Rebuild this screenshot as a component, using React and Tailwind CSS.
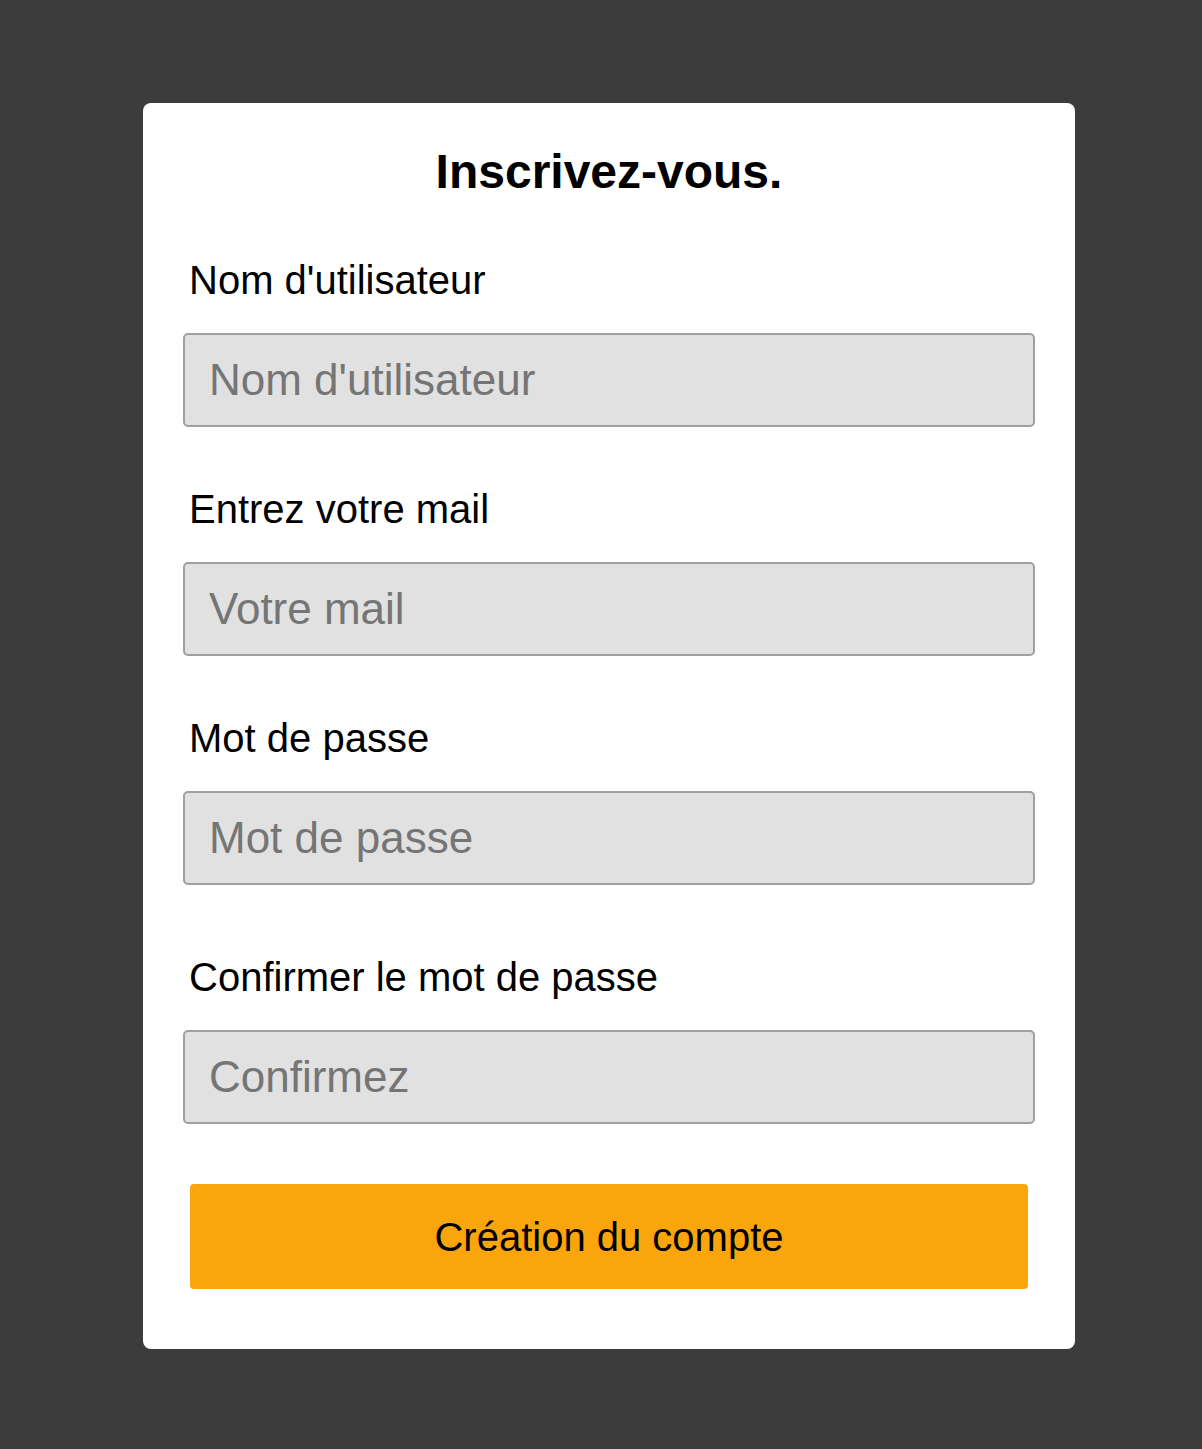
export default function App() {
  const fields = [
    { label: "Nom d'utilisateur", placeholder: "Nom d'utilisateur", type: "text", mt: "mt-[58px]" },
    { label: "Entrez votre mail", placeholder: "Votre mail", type: "email", mt: "mt-[59px]" },
    { label: "Mot de passe", placeholder: "Mot de passe", type: "password", mt: "mt-[59px]" },
    { label: "Confirmer le mot de passe", placeholder: "Confirmez", type: "password", mt: "mt-[69px]" },
  ];
  return (
    <div className="min-h-[1449px] bg-[#3c3c3c] pt-[103px] pb-[100px] font-['Liberation_Sans',Arial,sans-serif]">
      <div className="ml-[143px] w-[932px] rounded-[8px] bg-white px-[40px] pt-[41px] pb-[60px]">
        <h1 className="text-center text-[48px] leading-[55px] font-bold text-black">Inscrivez-vous.</h1>
        {fields.map((f) => (
          <div key={f.label}>
            <label className={`block ${f.mt} pl-[6px] text-[40px] leading-[46px] text-black`}>{f.label}</label>
            <input
              type="text"
              placeholder={f.placeholder}
              className="mt-[30px] block h-[94px] w-full rounded-[5px] border-2 border-[#a0a0a0] bg-[#e1e1e1] px-[24px] text-[44px] text-black outline-none placeholder:text-[#757575]"
            />
          </div>
        ))}
        <button className="mx-[7px] mt-[60px] block h-[105px] w-[838px] rounded-[4px] bg-[#f9a50b] text-[40px] text-black">
          Création du compte
        </button>
      </div>
    </div>
  );
}
